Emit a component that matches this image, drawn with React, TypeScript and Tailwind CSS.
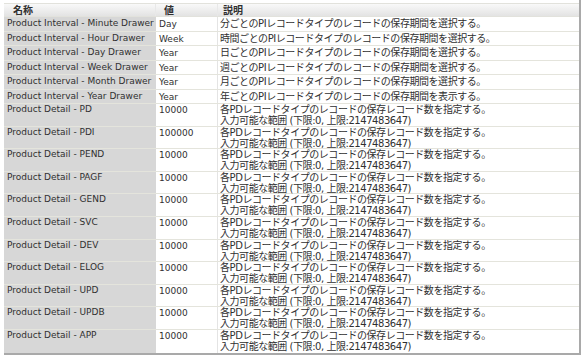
const jp = "font-['DejaVu_Sans','Noto_Sans_CJK_JP',sans-serif]";
const hd = "font-['Noto_Sans_CJK_JP',sans-serif]";
const lat = "font-['DejaVu_Sans',sans-serif]";

const singles: [string, string, string][] = [
  ["Product Interval - Minute Drawer", "Day", "分ごとのPIレコードタイプのレコードの保存期間を選択する。"],
  ["Product Interval - Hour Drawer", "Week", "時間ごとのPIレコードタイプのレコードの保存期間を選択する。"],
  ["Product Interval - Day Drawer", "Year", "日ごとのPIレコードタイプのレコードの保存期間を選択する。"],
  ["Product Interval - Week Drawer", "Year", "週ごとのPIレコードタイプのレコードの保存期間を選択する。"],
  ["Product Interval - Month Drawer", "Year", "月ごとのPIレコードタイプのレコードの保存期間を選択する。"],
  ["Product Interval - Year Drawer", "Year", "年ごとのPIレコードタイプのレコードの保存期間を表示する。"],
];

const doubles: [string, string][] = [
  ["PD", "10000"],
  ["PDI", "100000"],
  ["PEND", "10000"],
  ["PAGF", "10000"],
  ["GEND", "10000"],
  ["SVC", "10000"],
  ["DEV", "10000"],
  ["ELOG", "10000"],
  ["UPD", "10000"],
  ["UPDB", "10000"],
  ["APP", "10000"],
];

export default function App() {
  return (
    <div className="w-[585px] h-[359px] bg-white overflow-hidden pl-[4px]">
      <div className="w-[577px] pt-[3px] border-r-2 border-b-2 border-[#a9a9a9] text-[#303030]">
        <div className={`flex h-[14px] border-t border-b border-[#e2e2dc] bg-linear-to-b from-[#f9f9f9] to-[#e3e3e3] font-bold text-[10px] leading-[12px] ${hd}`}>
          <div className="w-[152px] pl-[9px] border-r border-[#e8e8e8]">名称</div>
          <div className="w-[62px] pl-[8px] border-r border-[#e8e8e8]">値</div>
          <div className="flex-1 pl-[5px]">説明</div>
        </div>
        {singles.map(([name, val, desc]) => (
          <div key={name} className="flex h-[14.5px] border-b border-[#e4e4dc]">
            <div className={`w-[152px] shrink-0 bg-[#d7d7d7] pl-[3px] text-[9px] leading-[13.5px] whitespace-nowrap ${lat}`}>{name}</div>
            <div className={`w-[62px] shrink-0 pl-[3px] pt-[1px] text-[9px] leading-[13.5px] border-r border-[#e4e4e4] ${lat}`}>{val}</div>
            <div className={`flex-1 pl-[2px] text-[10px] tracking-[-0.45px] leading-[13.5px] whitespace-nowrap ${jp}`}>{desc}</div>
          </div>
        ))}
        {doubles.map(([code, val], i) => (
          <div
            key={code}
            className={`flex h-[22.6px] ${i < doubles.length - 1 ? "border-b border-[#e4e4dc]" : ""}`}
          >
            <div className={`w-[152px] shrink-0 bg-[#d7d7d7] pl-[3px] text-[9px] leading-[11px] whitespace-nowrap ${lat}`}>
              Product Detail - {code}
            </div>
            <div className={`w-[62px] shrink-0 pl-[3px] pt-[1px] text-[9px] leading-[11px] border-r border-[#e4e4e4] ${lat}`}>{val}</div>
            <div className={`flex-1 pl-[2px] text-[10px] tracking-[-0.45px] leading-[11px] whitespace-nowrap ${jp}`}>
              <div>各PDレコードタイプのレコードの保存レコード数を指定する。</div>
              <div>入力可能な範囲 (下限:0, 上限:2147483647)</div>
            </div>
          </div>
        ))}
      </div>
    </div>
  );
}
